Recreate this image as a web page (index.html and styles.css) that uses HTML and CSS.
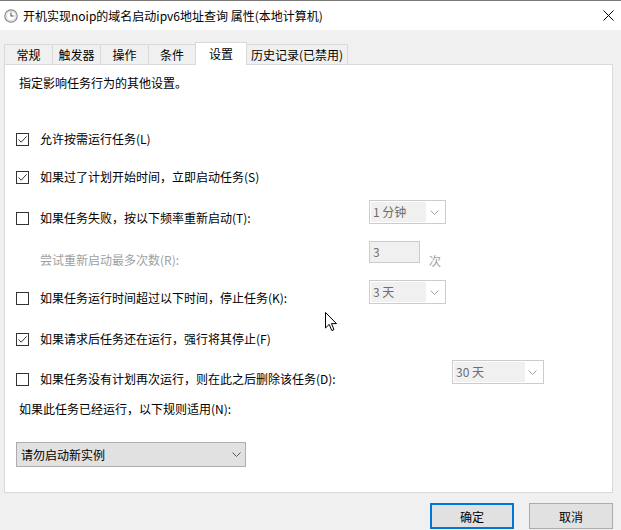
FILE: index.html
```html
<!DOCTYPE html>
<html lang="zh-CN">
<head>
    <meta charset="UTF-8">
    <title>属性</title>
    <link rel="stylesheet" href="styles.css">
</head>
<body>
<div class="window">
    <div class="titlebar">
        <svg class="app-icon" width="14" height="14" viewBox="0 0 14 14">
            <circle cx="7" cy="7" r="6.2" fill="#f4f4f4" stroke="#8a8a8a" stroke-width="1.2"/>
            <circle cx="7" cy="7" r="4.6" fill="#fff" stroke="#c9c9c9" stroke-width="0.6"/>
            <path d="M7 3.4 V7 H9.8" fill="none" stroke="#555" stroke-width="1.1"/>
        </svg>
        <span class="title">开机实现noip的域名启动ipv6地址查询 属性(本地计算机)</span>
        <svg class="close" width="11" height="11" viewBox="0 0 11 11">
            <path d="M0.5 0.5 L10.5 10.5 M10.5 0.5 L0.5 10.5" stroke="#000" stroke-width="1"/>
        </svg>
    </div>

    <div class="tabs">
        <div class="tab w49">常规</div>
        <div class="tab w49">触发器</div>
        <div class="tab w49">操作</div>
        <div class="tab w48">条件</div>
        <div class="tab active">设置</div>
        <div class="tab w102">历史记录(已禁用)</div>
    </div>

    <div class="panel">
        <p class="intro">指定影响任务行为的其他设置。</p>

        <div class="row r1">
            <label class="check"><span class="box"><svg width="11" height="11" viewBox="0 0 11 11"><path d="M1.5 5.5 L4.2 8.2 L9.6 2.4" fill="none" stroke="#333" stroke-width="1"/></svg></span>允许按需运行任务(L)</label>
        </div>

        <div class="row r2">
            <label class="check"><span class="box"><svg width="11" height="11" viewBox="0 0 11 11"><path d="M1.5 5.5 L4.2 8.2 L9.6 2.4" fill="none" stroke="#333" stroke-width="1"/></svg></span>如果过了计划开始时间，立即启动任务(S)</label>
        </div>

        <div class="row r3 ctl">
            <label class="check left"><span class="box"></span>如果任务失败，按以下频率重新启动(T):</label>
            <div class="select off w77"><span class="value v55">1 分钟</span><svg class="chev" width="9" height="5" viewBox="0 0 9 5"><path d="M0.5 0.5 L4.5 4.5 L8.5 0.5" fill="none" stroke="#a6a6a6"/></svg></div>
        </div>

        <div class="row r4 ctl">
            <span class="sub left">尝试重新启动最多次数(R):</span>
            <div class="input off">3</div>
            <span class="unit">次</span>
        </div>

        <div class="row r5 ctl">
            <label class="check left"><span class="box"></span>如果任务运行时间超过以下时间，停止任务(K):</label>
            <div class="select off w77"><span class="value v55">3 天</span><svg class="chev" width="9" height="5" viewBox="0 0 9 5"><path d="M0.5 0.5 L4.5 4.5 L8.5 0.5" fill="none" stroke="#a6a6a6"/></svg></div>
        </div>

        <div class="row r6">
            <label class="check"><span class="box"><svg width="11" height="11" viewBox="0 0 11 11"><path d="M1.5 5.5 L4.2 8.2 L9.6 2.4" fill="none" stroke="#333" stroke-width="1"/></svg></span>如果请求后任务还在运行，强行将其停止(F)</label>
        </div>

        <div class="row r7 ctl">
            <label class="check left wide"><span class="box"></span>如果任务没有计划再次运行，则在此之后删除该任务(D):</label>
            <div class="select off w92"><span class="value v71">30 天</span><svg class="chev" width="9" height="5" viewBox="0 0 9 5"><path d="M0.5 0.5 L4.5 4.5 L8.5 0.5" fill="none" stroke="#a6a6a6"/></svg></div>
        </div>

        <p class="rule">如果此任务已经运行，以下规则适用(N):</p>

        <div class="select main"><span class="value">请勿启动新实例</span><svg class="chev" width="9" height="5" viewBox="0 0 9 5"><path d="M0.5 0.5 L4.5 4.5 L8.5 0.5" fill="none" stroke="#555"/></svg></div>
    </div>

    <div class="buttons">
        <button class="btn default">确定</button>
        <button class="btn">取消</button>
    </div>

    <svg class="cursor" width="13" height="20" viewBox="0 0 13 20">
        <path d="M0.5 0.5 L0.5 16 L4.2 12.4 L6.8 18.6 L9 17.6 L6.5 11.6 L11.5 11.6 Z" fill="#fff" stroke="#000" stroke-width="1"/>
    </svg>
</div>
</body>
</html>
```

FILE: styles.css
```css
body {
    margin: 0;
    font-family: "Segoe UI", "Noto Sans CJK SC", sans-serif;
    font-size: 12px;
    color: #000;
    background-color: #f0f0f0;
}
.window {
    position: relative;
    width: 621px;
    height: 530px;
    overflow: hidden;
    background-color: #f0f0f0;
}
.titlebar {
    box-sizing: border-box;
    height: 30px;
    border-top: 1px solid #7c7a76;
    background-color: #fff;
    display: flex;
    align-items: center;
    padding-left: 4px;
}
.app-icon {
    flex: none;
    margin-top: 1px;
}
.title {
    margin-left: 5px;
    line-height: 16px;
    flex: 1;
}
.close {
    margin-right: 7px;
}
.tabs {
    display: flex;
    align-items: flex-end;
    height: 22px;
    margin-top: 12px;
    padding-left: 4px;
    position: relative;
    z-index: 2;
}
.tab {
    box-sizing: border-box;
    height: 20px;
    border: 1px solid #d9d9d9;
    border-bottom: none;
    margin-left: -1px;
    text-align: center;
    line-height: 18px;
    padding-top: 1px;
    background-color: #f0f0f0;
}
.tab:first-child {
    margin-left: 0;
}
.w49 { width: 49px; }
.w48 { width: 48px; }
.w102 { width: 102px; }
.tab.active {
    width: 52px;
    height: 23px;
    margin-bottom: -1px;
    background-color: #fff;
    line-height: 20px;
    position: relative;
}
.panel {
    box-sizing: border-box;
    width: 609px;
    height: 429px;
    margin-left: 4px;
    border: 1px solid #d9d9d9;
    background-color: #fff;
    padding: 10px 0 0 11px;
}
.intro, .rule {
    margin: 0 0 0 3px;
    line-height: 16px;
}
.row {
    display: flex;
    align-items: flex-start;
}
.check {
    display: flex;
    align-items: center;
    line-height: 16px;
    height: 16px;
}
.box {
    box-sizing: border-box;
    width: 13px;
    height: 13px;
    border: 1px solid #333;
    margin-right: 11px;
    display: flex;
    align-items: center;
    justify-content: center;
}
.left {
    width: 353px;
    flex: none;
}
.left.wide {
    width: 436px;
}
.r1 { margin-top: 40px; }
.r2 { margin-top: 22px; }
.r3 { margin-top: 15px; }
.r4 { margin-top: 15px; }
.r5 { margin-top: 11px; }
.r6 { margin-top: 25px; }
.r7 { margin-top: 13px; }
.rule { margin-top: 14px; }
.r3 .check, .r5 .check { margin-top: 10px; }
.r7 .check { margin-top: 11px; }
.sub {
    box-sizing: border-box;
    padding-left: 24px;
    margin-top: 11px;
    line-height: 16px;
    color: #a0a0a0;
}
.unit {
    margin-left: 9px;
    margin-top: 12px;
    line-height: 16px;
    color: #a0a0a0;
}
.select {
    box-sizing: border-box;
    display: flex;
    align-items: center;
    border: 1px solid #ccc;
    background-color: #fff;
    height: 24px;
}
.select.off {
    padding: 1px;
}
.select .value {
    height: 20px;
    line-height: 20px;
    padding-left: 2px;
    box-sizing: border-box;
}
.select.off .value {
    background-color: #f0f0f0;
    color: #6d6d6d;
}
.w77 { width: 77px; }
.w92 { width: 92px; }
.v55 { width: 55px; }
.v71 { width: 71px; }
.select .chev {
    margin-left: auto;
    margin-right: 5px;
}
.input {
    box-sizing: border-box;
    width: 51px;
    height: 22px;
    border: 1px solid #ccc;
    background-color: #f0f0f0;
    color: #6d6d6d;
    line-height: 20px;
    padding-left: 3px;
}
.select.main {
    width: 230px;
    height: 25px;
    margin-top: 25px;
    border-color: #adadad;
    background-color: #e1e1e1;
}
.select.main .value {
    padding-left: 4px;
    line-height: 23px;
    height: 23px;
}
.select.main .chev {
    margin-right: 4px;
}
.buttons {
    display: flex;
    justify-content: flex-end;
    gap: 15px;
    margin-top: 10px;
    padding-right: 8px;
}
.btn {
    box-sizing: border-box;
    width: 84px;
    height: 26px;
    border: 1px solid #adadad;
    background-color: #e1e1e1;
    font-family: inherit;
    font-size: 12px;
    color: #000;
    padding: 0;
}
.btn.default {
    border: 2px solid #0078d7;
}
.cursor {
    position: absolute;
    left: 325px;
    top: 312px;
}
```
